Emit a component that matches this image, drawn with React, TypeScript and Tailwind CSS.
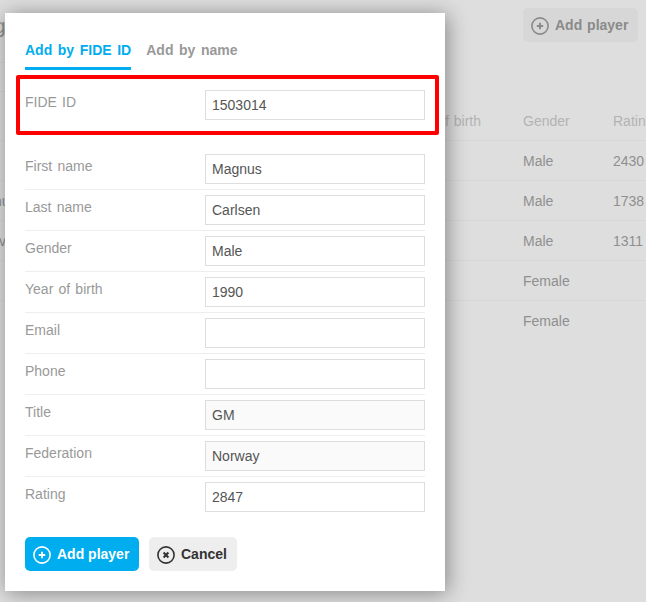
import { useState } from 'react';

interface Field {
  label: string;
  value: string;
  readOnly?: boolean;
}

const FIELDS: Field[] = [
  { label: 'First name', value: 'Magnus' },
  { label: 'Last name', value: 'Carlsen' },
  { label: 'Gender', value: 'Male' },
  { label: 'Year of birth', value: '1990' },
  { label: 'Email', value: '' },
  { label: 'Phone', value: '' },
  { label: 'Title', value: 'GM', readOnly: true },
  { label: 'Federation', value: 'Norway', readOnly: true },
  { label: 'Rating', value: '2847' },
];

const PLAYERS = [
  { name: '', gender: 'Male', rating: '2430' },
  { name: 'nu', gender: 'Male', rating: '1738' },
  { name: 'v', gender: 'Male', rating: '1311' },
  { name: '', gender: 'Female', rating: '' },
  { name: '', gender: 'Female', rating: '' },
];

function PlusCircle() {
  return (
    <svg width="18" height="18" viewBox="0 0 18 18" fill="none" stroke="currentColor" className="relative top-px shrink-0">
      <circle cx="9" cy="9" r="8.1" strokeWidth="1.6" />
      <path d="M9 5.8v6.4M5.8 9h6.4" strokeWidth="1.9" />
    </svg>
  );
}

function CrossCircle() {
  return (
    <svg width="18" height="18" viewBox="0 0 18 18" fill="none" stroke="currentColor" className="relative top-px shrink-0">
      <circle cx="9" cy="9" r="8.1" strokeWidth="1.6" />
      <path d="M6.6 6.6l4.8 4.8M11.4 6.6l-4.8 4.8" strokeWidth="2.1" />
    </svg>
  );
}

function FormRow({ label, value, readOnly }: Field) {
  return (
    <label className="flex h-[41px] items-start border-b border-[#eeeeee] py-[5px] last:border-transparent">
      <span className="w-[180px] pt-0.5 leading-5 text-[#999999] [word-spacing:1.3px]">{label}</span>
      <input
        type="text"
        defaultValue={value}
        readOnly={readOnly}
        className="h-[30px] w-[220px] border border-[#dddddd] bg-white px-1.5 text-[#555555] outline-none read-only:bg-[#fafafa]"
      />
    </label>
  );
}

function PlayersPage() {
  return (
    <div className="h-full text-[#8f8f8f]">
      <div className="flex h-[62px] items-start justify-between pt-2 pr-2">
        <h1 className="-ml-[6px] pt-1 text-[21px] leading-7">g</h1>
        <button className="flex h-[34px] w-[115px] items-center gap-1.5 rounded-[5px] bg-[#d7d7d7] pl-2 font-bold text-[#8a8a8a] [word-spacing:1px]">
          <PlusCircle />
          Add player
        </button>
      </div>
      <div className="h-[30px] w-[200px] border-y border-[#d6d6d6]" />
      <div className="grid h-[49px] grid-cols-[404px_119px_90px_120px] items-center border-b border-[#d8d8d8] pt-2.5 text-[#b3b3b3]">
        <span />
        <span className="[word-spacing:1px]">Year of birth</span>
        <span>Gender</span>
        <span>Rating</span>
      </div>
      {PLAYERS.map((p, i) => (
        <div
          key={i}
          className="grid h-10 grid-cols-[404px_119px_90px_120px] items-center border-b border-[#d8d8d8] last:border-transparent"
        >
          <span className={p.name.length > 1 ? '-ml-[6px]' : '-ml-px'}>{p.name}</span>
          <span />
          <span>{p.gender}</span>
          <span>{p.rating}</span>
        </div>
      ))}
    </div>
  );
}

function AddPlayerDialog() {
  const [tab, setTab] = useState('fide');
  const tabs = [
    { id: 'fide', title: 'Add by FIDE ID' },
    { id: 'name', title: 'Add by name' },
  ];

  return (
    <div className="absolute top-[13px] left-[5px] h-[578px] w-[440px] bg-white px-5 pt-[27px] shadow-[2px_2px_20px_rgba(0,0,0,0.4)]">
      <div className="flex h-[30px] gap-[15px]">
        {tabs.map((t) => (
          <button
            key={t.id}
            onClick={() => setTab(t.id)}
            className={`border-b-[3px] pb-[7px] leading-5 font-bold whitespace-nowrap [word-spacing:1.7px] ${
              tab === t.id ? 'border-[#00adef] text-[#00adef]' : 'border-transparent text-[#999999]'
            }`}
          >
            {t.title}
          </button>
        ))}
      </div>

      {/* highlighted ID lookup */}
      <div className="mt-[5px] -mr-[14px] -ml-[9px] h-[60px] rounded-[2px] border-4 border-[#ff0000] px-[5px] pt-1.5">
        <FormRow label="FIDE ID" value="1503014" />
      </div>

      <div className="mt-[14px]">
        {FIELDS.map((f) => (
          <FormRow key={f.label} {...f} />
        ))}
      </div>

      <div className="mt-[19px] flex gap-2.5 font-bold">
        <button className="flex h-[34px] w-[114px] items-center gap-1.5 rounded-[5px] bg-[#00adef] pl-2 whitespace-nowrap text-white">
          <PlusCircle />
          Add player
        </button>
        <button className="flex h-[34px] w-[88px] items-center gap-1.5 rounded-[5px] bg-[#eeeeee] pl-2 text-[#333333]">
          <CrossCircle />
          Cancel
        </button>
      </div>
    </div>
  );
}

export default function App() {
  return (
    <div className="relative h-[602px] w-[646px] overflow-hidden bg-[#dedede] font-['Liberation_Sans',Arial,sans-serif] text-sm">
      <PlayersPage />
      <AddPlayerDialog />
    </div>
  );
}
